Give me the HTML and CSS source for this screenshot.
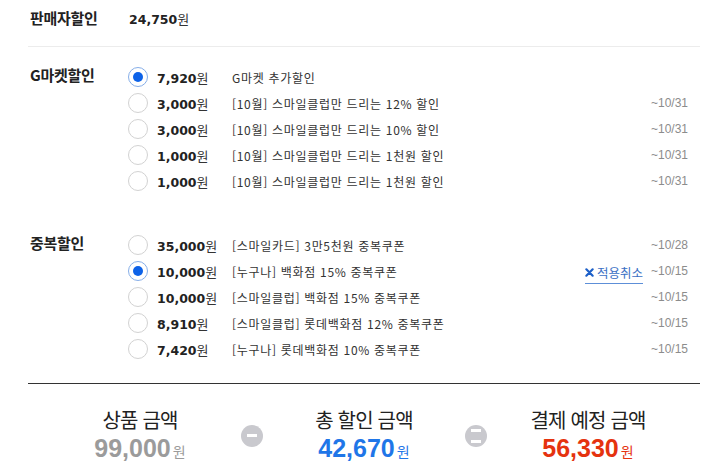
FILE: index.html
```html
<!DOCTYPE html>
<html lang="ko">
<head>
<meta charset="utf-8">
<title>할인 적용</title>
<link rel="stylesheet" href="styles.css">
</head>
<body>
<div class="page">
  <div class="seller">
    <div class="label">판매자할인</div>
    <div class="seller-value"><span class="amount"><b>24,750</b>원</span></div>
  </div>

  <div class="group">
    <div class="label">G마켓할인</div>
    <ul class="opts">
      <li class="opt"><input type="radio" class="radio" name="g" checked><span class="amount"><b>7,920</b>원</span><span class="desc">G마켓 추가할인</span></li>
      <li class="opt"><input type="radio" class="radio" name="g"><span class="amount"><b>3,000</b>원</span><span class="desc">[10월] 스마일클럽만 드리는 12% 할인</span><span class="date">~10/31</span></li>
      <li class="opt"><input type="radio" class="radio" name="g"><span class="amount"><b>3,000</b>원</span><span class="desc">[10월] 스마일클럽만 드리는 10% 할인</span><span class="date">~10/31</span></li>
      <li class="opt"><input type="radio" class="radio" name="g"><span class="amount"><b>1,000</b>원</span><span class="desc">[10월] 스마일클럽만 드리는 1천원 할인</span><span class="date">~10/31</span></li>
      <li class="opt"><input type="radio" class="radio" name="g"><span class="amount"><b>1,000</b>원</span><span class="desc">[10월] 스마일클럽만 드리는 1천원 할인</span><span class="date">~10/31</span></li>
    </ul>
  </div>

  <div class="group">
    <div class="label">중복할인</div>
    <ul class="opts">
      <li class="opt"><input type="radio" class="radio" name="d"><span class="amount"><b>35,000</b>원</span><span class="desc">[스마일카드] 3만5천원 중복쿠폰</span><span class="date">~10/28</span></li>
      <li class="opt"><input type="radio" class="radio" name="d" checked><span class="amount"><b>10,000</b>원</span><span class="desc">[누구나] 백화점 15% 중복쿠폰</span><a class="cancel" href="#"><svg class="x-icon" viewBox="0 0 10 10" width="9" height="9"><path d="M1.5 1.5 L8.5 8.5 M8.5 1.5 L1.5 8.5" stroke="#1c5fc8" stroke-width="2.4" stroke-linecap="round"/></svg>적용취소</a><span class="date">~10/15</span></li>
      <li class="opt"><input type="radio" class="radio" name="d"><span class="amount"><b>10,000</b>원</span><span class="desc">[스마일클럽] 백화점 15% 중복쿠폰</span><span class="date">~10/15</span></li>
      <li class="opt"><input type="radio" class="radio" name="d"><span class="amount"><b>8,910</b>원</span><span class="desc">[스마일클럽] 롯데백화점 12% 중복쿠폰</span><span class="date">~10/15</span></li>
      <li class="opt"><input type="radio" class="radio" name="d"><span class="amount"><b>7,420</b>원</span><span class="desc">[누구나] 롯데백화점 10% 중복쿠폰</span><span class="date">~10/15</span></li>
    </ul>
  </div>

  <div class="summary">
    <div class="sum-col">
      <div class="sum-label">상품 금액</div>
      <div class="sum-value gray">99,000<span class="won">원</span></div>
    </div>
    <div class="op minus"></div>
    <div class="sum-col">
      <div class="sum-label">총 할인 금액</div>
      <div class="sum-value blue">42,670<span class="won">원</span></div>
    </div>
    <div class="op equals"></div>
    <div class="sum-col">
      <div class="sum-label">결제 예정 금액</div>
      <div class="sum-value red">56,330<span class="won">원</span></div>
    </div>
  </div>
</div>
</body>
</html>
```

FILE: styles.css
```css
* { box-sizing: border-box; }

body {
  margin: 0;
  background: #fff;
  color: #222;
  font-family: "Noto Sans CJK KR", "Noto Sans", sans-serif;
}

.page {
  padding: 0 6px 0 28px;
}

.seller {
  display: grid;
  grid-template-columns: 100px 1fr;
  height: 47px;
  padding-top: 7px;
  line-height: 20px;
  border-bottom: 1px solid #ececec;
}

.label {
  padding-left: 2px;
  font-size: 15px;
  font-weight: bold;
  letter-spacing: -0.3px;
  color: #222;
  line-height: 22px;
}

.seller-value {
  padding-left: 1px;
}

.group {
  display: grid;
  grid-template-columns: 100px 1fr;
  padding: 17px 0 21px;
}

.opts {
  list-style: none;
  margin: 0;
  padding: 0 12px 0 0;
}

.opt {
  display: flex;
  align-items: center;
  height: 26px;
}

.radio {
  appearance: none;
  -webkit-appearance: none;
  flex: none;
  width: 20px;
  height: 20px;
  margin: 0 9px 0 0;
  border: 1px solid #d2d2d2;
  border-radius: 50%;
  background: #fff;
  display: grid;
  place-content: center;
}

.radio:checked {
  border-color: #86aee8;
}

.radio:checked::before {
  content: "";
  width: 10px;
  height: 10px;
  border-radius: 50%;
  background: #0d62e8;
}

.amount {
  flex: none;
  width: 75px;
  font-size: 13px;
  color: #333;
  white-space: nowrap;
}

.amount b {
  font-family: "DejaVu Sans", sans-serif;
  font-size: 12.5px;
  font-weight: bold;
  color: #222;
}

.desc {
  flex: 1;
  font-size: 12px;
  letter-spacing: 0.7px;
  color: #333;
  white-space: nowrap;
}

.cancel {
  display: flex;
  align-items: center;
  gap: 3px;
  padding: 2px 0 1px;
  border-bottom: 1px solid #5d8fd8;
  font-size: 12.5px;
  color: #3b70c4;
  text-decoration: none;
  margin-top: 3px;
}

.x-icon {
  display: block;
}

.date {
  margin-left: 8px;
  font-family: "Liberation Sans", sans-serif;
  font-size: 12px;
  color: #8c8c8c;
}

.summary {
  display: flex;
  align-items: center;
  border-top: 1px solid #333;
  padding-top: 21px;
}

.sum-col {
  flex: 1;
  text-align: center;
}

.sum-label {
  font-size: 20px;
  line-height: 29px;
  letter-spacing: -0.8px;
  color: #222;
}

.sum-value {
  font-family: "Liberation Sans", sans-serif;
  font-size: 25px;
  font-weight: bold;
  line-height: 29px;
}

.won {
  font-family: "Noto Sans CJK KR", sans-serif;
  font-size: 14px;
  font-weight: normal;
  margin-left: 2px;
}

.gray { color: #9b9b9b; }
.blue { color: #1f76e8; }
.red { color: #e5330f; }

.op {
  flex: none;
  width: 22px;
  height: 22px;
  margin: 0 -11px;
  border-radius: 50%;
  background: #c9c9ce;
  display: grid;
  place-content: center;
}

.minus::before {
  content: "";
  width: 10px;
  height: 3px;
  background: #fff;
}

.equals::before {
  content: "";
  width: 10px;
  height: 8px;
  border-top: 3px solid #fff;
  border-bottom: 3px solid #fff;
}
```
